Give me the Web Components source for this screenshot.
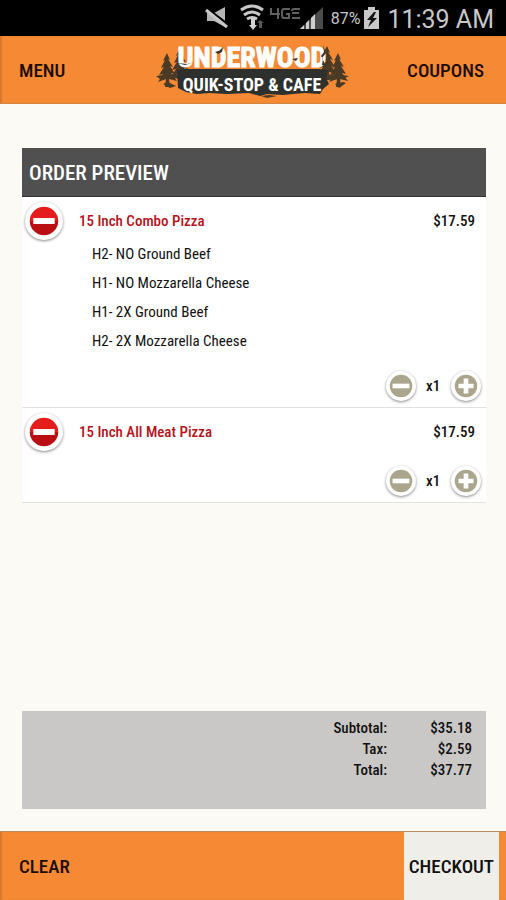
<!DOCTYPE html>
<html lang="en">
<head>
<meta charset="utf-8">
<meta name="viewport" content="width=device-width, initial-scale=1">
<title>Order Preview</title>
<style>
  body {
    margin: 0;
    background: #fbfaf5;
    color: #111;
    font-family: "Roboto Condensed", "Liberation Sans Narrow", Roboto, sans-serif;
    font-size: 15px;
  }
</style>
</head>
<body>
<order-app></order-app>

<script>
class StatusBar extends HTMLElement {
  constructor() {
    super();
    this.attachShadow({ mode: "open" }).innerHTML = `
      <style>
        :host {
          display: flex;
          justify-content: flex-end;
          align-items: center;
          height: 36px;
          padding: 0 12px;
          background: #000;
          color: #c8c8c8;
          font-family: Roboto, sans-serif;
        }
        svg { display: block; }
        .battery { font-size: 16px; margin: 0 4px 0 8px; }
        .clock { font-size: 25px; line-height: 40px; margin-left: 8px; padding-top: 3px; }
      </style>
      <svg width="118" height="36" viewBox="0 0 118 36" aria-hidden="true">
        <path d="M2 13h7l11-6v20l-11-6H2z" fill="#b5b5b5"/>
        <path d="M1 8l22 17" stroke="#000" stroke-width="3"/>
        <path d="M1 10l21 17" stroke="#c8c8c8" stroke-width="3"/>
        <g fill="none" stroke="#c8c8c8" stroke-width="3">
          <path d="M36 10q11-8 22 0M39 15q8-6 16 0M42 19q5-3 10 0"/>
        </g>
        <path d="M46 18h4v7h2l-4 5-4-5h2z" fill="#d2d2d2"/>
        <path d="M54 28v-5h-2l3-3 4 3h-2v5z" fill="#555"/>
        <g fill="none" stroke="#606060" stroke-width="2">
          <path d="M66 8v6h9M73 8v11M85 9h-6q-2 0-2 3v3q0 3 2 3h5v-4h-3"/>
          <path d="M95 9h-6q-2 0-2 2M94 13h-7M95 18h-8"/>
        </g>
        <path d="M95 29l23-22v22z" fill="#4b4b4b"/>
        <path d="M95 29l4-4v4zM101 29v-6l3-3v9zM106 29V18l4-4v15z" fill="#cfcfcf"/>
      </svg>
      <span class="battery">87%</span>
      <svg width="15" height="36" viewBox="0 0 15 36" aria-hidden="true">
        <path d="M4 7h7v3h4v19H0V10h4z" fill="#c8c8c8"/>
        <path d="M10 12l-7 8h4l-3 7 9-9H9l3-6z" fill="#111"/>
      </svg>
      <span class="clock">11:39 AM</span>
    `;
  }
}
customElements.define("status-bar", StatusBar);

class BrandLogo extends HTMLElement {
  constructor() {
    super();
    this.attachShadow({ mode: "open" }).innerHTML = `
      <style>
        :host { display: block; }
        svg { display: block; }
        text {
          font: bold 28px "Roboto Condensed", "Liberation Sans Narrow", Roboto, sans-serif;
          fill: #fff;
        }
        .top { stroke: #fff; stroke-width: 1; }
        .bottom { font-size: 18px; }
      </style>
      <svg width="196" height="56" viewBox="0 0 196 56" role="img" aria-label="Underwood Quik-Stop &amp; Cafe">
        <defs>
          <path id="tree" d="M10 0l3 7-2-1 5 8-3-1 5 8-4-1 6 8-8-2 1 8h-5l1-8-8 3 5-8-4 1 5-8-3 1 4-8-2 1z"/>
        </defs>
        <g fill="#4a3a26">
          <use href="#tree" x="2" y="11"/>
          <use href="#tree" x="15" y="6"/>
          <use href="#tree" x="162" y="4"/>
          <use href="#tree" x="173" y="11"/>
          <path d="M1 34l14-2 12 2v3l-10-1-12 1zM8 42l5-2 8 4-6 2zM166 34l14-2 14 2-6 3-20 1zM180 42l8-2 3 1-7 5z"/>
        </g>
        <path d="M22 28l8-1h134l9 1-2 8 3 6-6 5-3 5-15-1-12 1-10 1-16-1-7 2-11-3-22 1-18-1-12 1-11-2-8-4z" fill="#2d302d"/>
        <path d="M106 54l8-1 8 1-10 2z" fill="#4a3a26"/>
        <text class="top" x="97" y="25" text-anchor="middle">UNDERWOOD</text>
        <path d="M22 21l10 1 8-2-10 3zM60 10l4-1 4-4-1 5-4 2zM168 3l3 8-4 5 4 8-4-1 1-6-2-3 3-4zM137 17l6-1-2 3z" fill="#3a3226"/>
        <text class="bottom" x="97" y="49" text-anchor="middle">QUIK-STOP &amp; CAFE</text>
      </svg>
    `;
  }
}
customElements.define("brand-logo", BrandLogo);

class NavBar extends HTMLElement {
  constructor() {
    super();
    this.attachShadow({ mode: "open" }).innerHTML = `
      <style>
        :host {
          display: grid;
          grid-template-columns: 1fr auto 1fr;
          height: 68px;
          box-sizing: border-box;
          background: #f68934;
          border-bottom: 1px solid #d08640;
          box-shadow: inset 2px 0 1px #d87830;
        }
        :host([bottom]) {
          display: flex;
          justify-content: space-between;
          height: 69px;
          border-bottom: 0;
          border-top: 1px solid #b98a60;
          padding-right: 7px;
        }
      </style>
      <slot></slot>
    `;
  }
}
customElements.define("nav-bar", NavBar);

class RoundButton extends HTMLElement {
  connectedCallback() {
    const kind = this.getAttribute("kind");
    const label = this.getAttribute("label");
    const big = kind === "remove";
    const fill = big ? "url(#red)" : "#aaa58c";
    const sign = kind === "plus"
      ? `<path d="M8 16h16M16 8v16" stroke="#fff" stroke-width="5"/>`
      : `<path d="M7 16h18" stroke="#fff" stroke-width="5"/>`;
    const size = big ? 38 : 30;
    this.attachShadow({ mode: "open" }).innerHTML = `
      <style>
        :host { display: block; }
        button {
          display: block;
          width: ${size}px;
          height: ${size}px;
          padding: 0;
          border: 0;
          border-radius: 50%;
          background: #fff;
          box-shadow: 0 1px 3px #888;
          cursor: pointer;
        }
        svg { display: block; }
      </style>
      <button type="button" aria-label="${label}">
        <svg width="${size}" height="${size}" viewBox="0 0 32 32">
          <defs>
            <linearGradient id="red" x2="0" y2="1">
              <stop offset=".5" stop-color="#e51c1c"/>
              <stop offset=".5" stop-color="#b90f12"/>
            </linearGradient>
          </defs>
          <circle cx="16" cy="16" r="12" fill="${fill}"/>
          ${sign}
        </svg>
      </button>
    `;
  }
}
customElements.define("round-button", RoundButton);

class OrderItem extends HTMLElement {
  connectedCallback() {
    const name = this.getAttribute("name");
    this.attachShadow({ mode: "open" }).innerHTML = `
      <style>
        :host {
          display: grid;
          grid-template-columns: 38px 1fr auto;
          column-gap: 16px;
          padding: 5px 5px 6px 3px;
          background: #fff;
          border-bottom: 1px solid #e2e1de;
        }
        h3, .price {
          margin: 0;
          font-size: 15px;
          line-height: 38px;
          font-weight: 500;
        }
        h3 { color: #b5121b; }
        .price { padding-right: 6px; }
        .extras { grid-column: 2 / 4; padding-left: 13px; }
        .qty {
          grid-column: 1 / 4;
          display: flex;
          justify-content: flex-end;
          align-items: center;
          gap: 10px;
          margin-top: 15px;
          font-weight: 500;
        }
        .qty output { width: 15px; white-space: nowrap; }
      </style>
      <round-button kind="remove" label="Remove ${name}"></round-button>
      <h3>${name}</h3>
      <span class="price">${this.getAttribute("price")}</span>
      <div class="extras"><slot></slot></div>
      <div class="qty">
        <round-button kind="minus" label="One less"></round-button>
        <output>x1</output>
        <round-button kind="plus" label="One more"></round-button>
      </div>
    `;
  }
}
customElements.define("order-item", OrderItem);

class OrderTotals extends HTMLElement {
  constructor() {
    super();
    this.attachShadow({ mode: "open" }).innerHTML = `
      <style>
        :host {
          display: flex;
          justify-content: flex-end;
          min-height: 98px;
          box-sizing: border-box;
          padding: 7px 14px;
          background: #c9c8c6;
        }
        table { border-collapse: collapse; align-self: flex-start; }
        th, td {
          padding: 0;
          line-height: 21px;
          font-weight: 500;
          text-align: right;
        }
        td { width: 85px; }
      </style>
      <table>
        <tr><th scope="row">Subtotal:</th><td>$35.18</td></tr>
        <tr><th scope="row">Tax:</th><td>$2.59</td></tr>
        <tr><th scope="row">Total:</th><td>$37.77</td></tr>
      </table>
    `;
  }
}
customElements.define("order-totals", OrderTotals);

class OrderApp extends HTMLElement {
  constructor() {
    super();
    this.attachShadow({ mode: "open" }).innerHTML = `
      <style>
        :host {
          display: flex;
          flex-direction: column;
          min-height: 100vh;
        }
        main {
          flex: 1;
          display: flex;
          flex-direction: column;
          justify-content: space-between;
          gap: 24px;
          padding: 44px 20px 22px 22px;
        }
        h2 {
          margin: 0;
          padding: 2px 7px 0;
          font-size: 21px;
          line-height: 46px;
          font-weight: 500;
          color: #fff;
          background: #505050;
          border-bottom: 1px solid #333;
        }
        ul {
          margin: 0;
          padding: 0;
          list-style: none;
          line-height: 29px;
        }
        nav-bar button, nav-bar a {
          display: flex;
          align-items: center;
          padding: 1px 19px 0;
          border: 0;
          background: none;
          font: inherit;
          font-size: 19px;
          font-weight: 500;
          color: #1c0d04;
          text-decoration: none;
        }
        nav-bar a.coupons { justify-self: end; padding-right: 22px; }
        nav-bar button.checkout {
          padding: 1px 5px 0;
          background: #efeee8;
          color: #111;
        }
        brand-logo { align-self: center; }
      </style>
      <status-bar></status-bar>
      <nav-bar>
        <a href="#menu">MENU</a>
        <brand-logo></brand-logo>
        <a class="coupons" href="#coupons">COUPONS</a>
      </nav-bar>
      <main>
        <section>
          <h2>ORDER PREVIEW</h2>
          <order-item name="15 Inch Combo Pizza" price="$17.59">
            <ul>
              <li>H2- NO Ground Beef</li>
              <li>H1- NO Mozzarella Cheese</li>
              <li>H1- 2X Ground Beef</li>
              <li>H2- 2X Mozzarella Cheese</li>
            </ul>
          </order-item>
          <order-item name="15 Inch All Meat Pizza" price="$17.59"></order-item>
        </section>
        <order-totals></order-totals>
      </main>
      <nav-bar bottom>
        <button type="button">CLEAR</button>
        <button type="button" class="checkout">CHECKOUT</button>
      </nav-bar>
    `;
  }
}
customElements.define("order-app", OrderApp);
</script>
</body>
</html>
